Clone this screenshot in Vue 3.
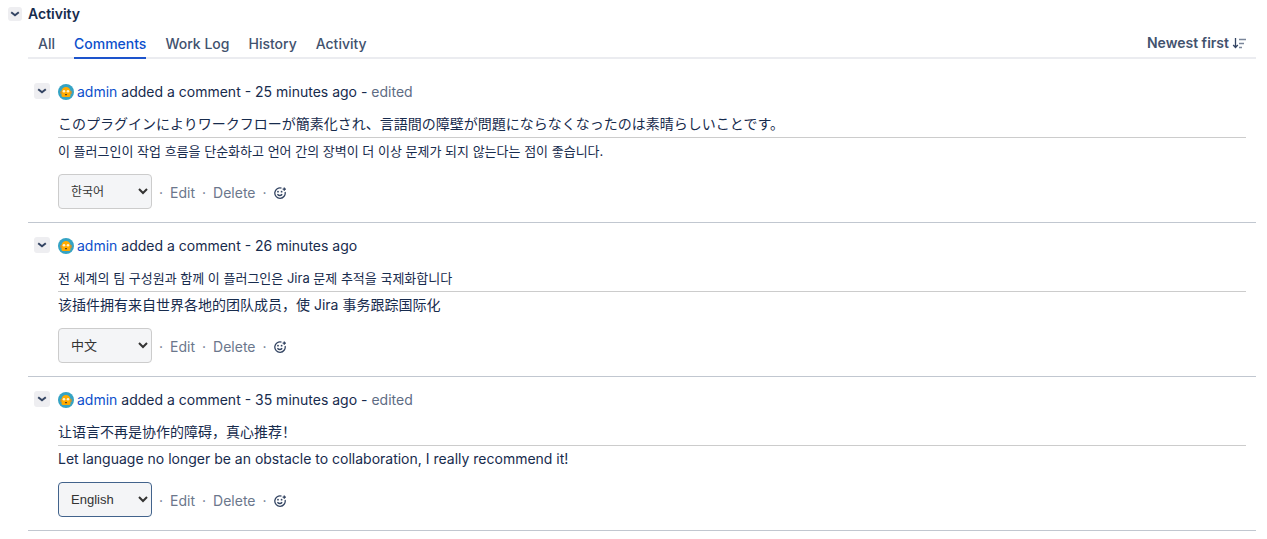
<script setup>
import { ref } from 'vue'

const tabs = ['All', 'Comments', 'Work Log', 'History', 'Activity']
const activeTab = ref('Comments')
const languages = [
  { code: 'ko', label: '한국어' },
  { code: 'zh', label: '中文' },
  { code: 'en', label: 'English' },
]
const comments = ref([
  {
    id: 1,
    age: '25 minutes ago',
    edited: true,
    text: 'このプラグインによりワークフローが簡素化され、言語間の障壁が問題にならなくなったのは素晴らしいことです。',
    lang: 'ja',
    translation: '이 플러그인이 작업 흐름을 단순화하고 언어 간의 장벽이 더 이상 문제가 되지 않는다는 점이 좋습니다.',
    target: 'ko',
  },
  {
    id: 2,
    age: '26 minutes ago',
    edited: false,
    text: '전 세계의 팀 구성원과 함께 이 플러그인은 Jira 문제 추적을 국제화합니다',
    lang: 'ko',
    translation: '该插件拥有来自世界各地的团队成员，使 Jira 事务跟踪国际化',
    target: 'zh',
  },
  {
    id: 3,
    age: '35 minutes ago',
    edited: true,
    text: '让语言不再是协作的障碍，真心推荐！',
    lang: 'zh',
    translation: 'Let language no longer be an obstacle to collaboration, I really recommend it!',
    target: 'en',
    current: true,
  },
])
</script>

<template>
  <section class="activity">
    <header class="heading">
      <button class="toggle small" type="button" aria-label="Collapse activity">
        <svg width="10" height="6" viewBox="0 0 10 6"><path d="M1.200 1.200 5 4.300 8.800 1.200" /></svg>
      </button>
      <h2>Activity</h2>
    </header>
    <div class="content">
      <nav class="tabs">
        <a
          v-for="tab in tabs"
          :key="tab"
          href="#"
          :class="{ active: tab === activeTab }"
          @click.prevent="activeTab = tab"
        >{{ tab }}</a>
        <button class="sort" type="button">
          Newest first
          <svg width="14" height="12" viewBox="0 0 14 12">
            <path class="arrow" d="M3.500 1v9M1.200 8 3.500 10.500 5.800 8" />
            <path class="bars" d="M7 2.500h7M7 6.500h5M7 10.500h3" />
          </svg>
        </button>
      </nav>
      <article v-for="c in comments" :key="c.id" class="comment">
        <button class="toggle" type="button" aria-label="Collapse comment">
          <svg width="10" height="6" viewBox="0 0 10 6"><path d="M1.200 1.200 5 4.300 8.800 1.200" /></svg>
        </button>
        <div class="main">
          <div class="meta">
            <svg class="avatar" width="16" height="16" viewBox="0 0 16 16">
              <circle cx="8" cy="8" r="8" fill="#35a3c4" />
              <path class="head" d="M3.500 7.500a4.500 4.500 0 0 1 9 0v4q0 1.500-1.500 1.500H5q-1.500 0-1.500-1.500z" />
              <path class="ears" d="M2.500 7h1v3h-1zM12.500 7h1v3h-1z" />
              <circle cx="6" cy="7.300" r="1.300" fill="#fff0c8" />
              <circle cx="10" cy="7.300" r="1.300" fill="#fff0c8" />
              <path class="mouth" d="M7 10h2v1.300H7z" />
            </svg>
            <span><a href="#">admin</a> added a comment - {{ c.age }}<template v-if="c.edited"> - <span class="edited">edited</span></template></span>
          </div>
          <p class="original" :class="c.lang" :lang="c.lang">{{ c.text }}</p>
          <p class="translation" :class="c.target" :lang="c.target">{{ c.translation }}</p>
          <div class="actions">
            <select v-model="c.target" aria-label="Translation language" :class="[c.target, { current: c.current }]">
              <option v-for="l in languages" :key="l.code" :value="l.code">{{ l.label }}</option>
            </select>
            <span class="dot">·</span>
            <a href="#">Edit</a>
            <span class="dot">·</span>
            <a href="#">Delete</a>
            <span class="dot">·</span>
            <button class="react" type="button" aria-label="Add reaction">
              <svg width="12" height="12" viewBox="0 0 12 12">
                <path d="M7.500 1.100A5.200 5.200 0 1 0 11.100 5" />
                <path d="M3.400 7.200q2.400 2.600 4.800 0" />
                <circle cx="4" cy="4.700" r=".9" />
                <circle cx="7.600" cy="4.700" r=".9" />
                <path d="M10.300.4v3.400M8.600 2.100h3.400" />
              </svg>
            </button>
          </div>
        </div>
      </article>
    </div>
  </section>
</template>

<style>
body {
  margin: 0;
  background: #fff;
}
</style>

<style scoped>
.activity {
  padding: 4px 11px 0 8px;
  color: #172b4d;
  font: 14px/20px Inter, "Noto Sans CJK JP", sans-serif;
}
.heading {
  display: flex;
  align-items: center;
  gap: 6px;
}
h2 {
  margin: 0;
  font-size: 14px;
  line-height: 20px;
  font-weight: 600;
}
button {
  padding: 0;
  border: 0;
  background: none;
  font: inherit;
  color: inherit;
  cursor: pointer;
}
a {
  color: #0c4fcc;
  text-decoration: none;
}
.toggle {
  display: flex;
  flex: none;
  align-items: center;
  justify-content: center;
  width: 16px;
  height: 16px;
  border-radius: 3px;
  background: #eeeef1;
}
.toggle.small {
  width: 14px;
  height: 14px;
}
svg path {
  fill: none;
  stroke: #344563;
}
.toggle path {
  stroke-width: 2;
}
.content {
  padding-left: 20px;
}
.tabs {
  display: flex;
  gap: 19px;
  margin-top: 10px;
  padding: 0 10px;
  border-bottom: 2px solid #ebecf0;
}
.tabs a {
  height: 23px;
  margin-bottom: -2px;
  border-bottom: 2px solid transparent;
  color: #42526e;
  font-weight: 500;
}
.tabs a.active {
  border-color: #1d54cc;
  color: #0c4fcc;
}
.sort {
  display: flex;
  align-items: center;
  gap: 3px;
  height: 18px;
  margin-left: auto;
  color: #42526e;
  font-weight: 600;
}
.sort .arrow {
  stroke-width: 1.3;
}
.sort .bars {
  stroke: #7a869a;
  stroke-width: 1.3;
}
.comment {
  display: flex;
  gap: 8px;
  padding: 13px 10px 13px 6px;
  border-bottom: 1px solid #c1c7d0;
}
.tabs + .comment {
  margin-top: 10px;
}
.comment > .toggle {
  margin-top: 1px;
}
.main {
  flex: 1;
  min-width: 0;
}
.meta {
  display: flex;
  align-items: center;
  gap: 3px;
}
.avatar path {
  stroke: none;
}
.avatar .head {
  fill: #ffab00;
}
.avatar .ears {
  fill: #ff8b00;
}
.avatar .mouth {
  fill: #5e4320;
}
.edited {
  color: #5e6c84;
}
p {
  height: 20px;
  margin: 0;
  white-space: nowrap;
}
.original {
  margin-top: 12px;
  padding-bottom: 3px;
  border-bottom: 1px solid #ccc;
}
.translation {
  padding-top: 3px;
}
.ko {
  font-family: Inter, "Noto Sans CJK KR", sans-serif;
}
p.ko {
  font-size: 13px;
}
.zh {
  font-family: Inter, "Noto Sans CJK SC", sans-serif;
}
.actions {
  display: flex;
  align-items: center;
  gap: 7px;
  margin-top: 13px;
}
.actions a,
.dot {
  padding-top: 3px;
  color: #6b778c;
}
.actions select {
  width: 94px;
  height: 35px;
  padding: 0 0 0 8px;
  border: 1px solid #ccc;
  border-radius: 4px;
  background: #f4f5f7;
  color: #333;
  font: 13px "Liberation Sans", "Noto Sans CJK SC", sans-serif;
}
.actions select.ko {
  font-family: "Liberation Sans", "Noto Sans CJK KR", sans-serif;
  font-size: 12px;
}
.actions select.current {
  border-color: #42638c;
}
.react {
  display: flex;
  padding-top: 3px;
}
.react path {
  stroke-width: 1.3;
}
.react circle {
  fill: #344563;
}
</style>
